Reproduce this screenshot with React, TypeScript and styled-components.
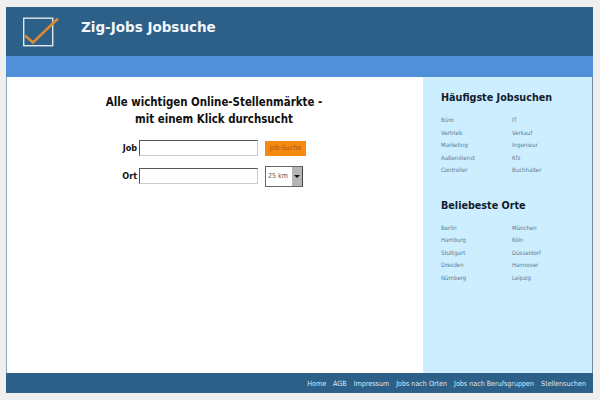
import * as React from 'react';
import styled, { createGlobalStyle } from 'styled-components';

const GlobalStyle = createGlobalStyle`
    html, body {
        margin: 0;
        padding: 0;
        background: #efefef;
        font-family: "DejaVu Sans Condensed", "DejaVu Sans", Verdana, sans-serif;
    }
`;

const Page = styled.div`
    width: 600px;
    height: 400px;
    padding: 7px 7px 7px 6px;
    box-sizing: border-box;
    overflow: hidden;
`;

const Frame = styled.div`
    height: 386px;
    display: flex;
    flex-direction: column;
`;

const Header = styled.header`
    height: 49px;
    flex: none;
    background: #2c6089;
    display: flex;
    align-items: flex-start;
    padding: 10px 0 0 17px;
    box-sizing: border-box;
`;

const Logo = styled.svg`
    width: 38px;
    height: 32px;
    flex: none;
`;

const Title = styled.h1`
    margin: 2px 0 0 20px;
    font-family: "DejaVu Sans", Verdana, sans-serif;
    font-size: 13.5px;
    line-height: 17px;
    font-weight: bold;
    color: #f2f6fa;
`;

const SubBar = styled.div`
    height: 21px;
    flex: none;
    background: #4f90d8;
`;

const Body = styled.div`
    flex: 1;
    display: flex;
    min-height: 0;
    border-left: 1px solid #8fa5b5;
    border-right: 1px solid #6f8ba3;
`;

const Main = styled.main`
    width: 416px;
    flex: none;
    background: #fff;
    padding: 17px 2px 0 0;
    box-sizing: border-box;
`;

const Headline = styled.h2`
    margin: 0 0 6px;
    font-size: 11.4px;
    line-height: 17px;
    font-weight: bold;
    color: #111;
    text-align: center;
`;

const FormRow = styled.div`
    display: flex;
    align-items: center;
    height: 28px;
`;

const Label = styled.label`
    width: 132px;
    flex: none;
    padding-right: 2px;
    box-sizing: border-box;
    text-align: right;
    font-size: 9px;
    font-weight: bold;
    color: #111;
`;

const TextInput = styled.input`
    width: 119px;
    height: 16px;
    flex: none;
    padding: 0;
    box-sizing: border-box;
    background: #fff;
    border: 1px solid #ccc;
    border-top: 1px solid #555;
    border-left: 1px solid #555;
    outline: none;
`;

const SearchButton = styled.button`
    width: 41px;
    height: 15px;
    flex: none;
    margin-left: 7px;
    padding: 0;
    border: none;
    background: #f58a13;
    color: #a8560a;
    font-family: inherit;
    font-size: 7px;
    line-height: 15px;
`;

const SelectBox = styled.div`
    width: 38px;
    height: 21px;
    flex: none;
    margin-left: 7px;
    display: flex;
    box-sizing: border-box;
    border: 1px solid #666;
    border-right-color: #444;
    background: #fff;
`;

const SelectValue = styled.span`
    flex: 1;
    padding-left: 2px;
    font-size: 7px;
    line-height: 19px;
    color: #555;
`;

const SelectArrow = styled.span`
    width: 10px;
    flex: none;
    display: flex;
    align-items: center;
    justify-content: center;
    background: #b5b5b5;

    &::after {
        content: '';
        border-left: 3px solid transparent;
        border-right: 3px solid transparent;
        border-top: 3px solid #111;
    }
`;

const Sidebar = styled.aside`
    flex: 1;
    background: #cdeeff;
    padding: 13px 0 0 18px;
    box-sizing: border-box;
`;

const SideSection = styled.section`
    margin-bottom: 21px;
`;

const SideTitle = styled.h3`
    margin: 0 0 9px;
    font-size: 10.7px;
    line-height: 15px;
    font-weight: bold;
    color: #10202c;
`;

const LinkGrid = styled.div`
    display: grid;
    grid-template-columns: 71px 1fr;
    grid-auto-rows: 12.5px;
`;

const SideLink = styled.a`
    font-size: 6px;
    line-height: 12.5px;
    color: #5b7a90;
    text-decoration: none;
`;

const Footer = styled.footer`
    height: 20px;
    flex: none;
    background: #2c6089;
    display: flex;
    align-items: center;
    justify-content: flex-end;
    gap: 7px;
    padding-right: 7px;
`;

const FooterLink = styled.a`
    font-size: 7.1px;
    color: #dfe9f1;
    text-decoration: none;
`;

const jobLinks = ['Büro', 'IT', 'Vertrieb', 'Verkauf', 'Marketing', 'Ingenieur', 'Außendienst', 'Kfz', 'Controller', 'Buchhalter'];
const placeLinks = ['Berlin', 'München', 'Hamburg', 'Köln', 'Stuttgart', 'Düsseldorf', 'Dresden', 'Hannover', 'Nürnberg', 'Leipzig'];
const footerLinks = ['Home', 'AGB', 'Impressum', 'Jobs nach Orten', 'Jobs nach Berufsgruppen', 'Stellensuchen'];

const App = () => (
    <Page>
        <GlobalStyle />
        <Frame>
            <Header>
                <Logo viewBox="0 0 38 32">
                    <rect x="0.7" y="1.2" width="29" height="27.5" fill="none" stroke="#dfe8ee" strokeWidth="1.4" />
                    <path d="M2 18.5 L10 25.5 L35 1.5" fill="none" stroke="#d98a32" strokeWidth="2.6" />
                </Logo>
                <Title>Zig-Jobs Jobsuche</Title>
            </Header>
            <SubBar />
            <Body>
                <Main>
                    <Headline>
                        Alle wichtigen Online-Stellenmärkte -<br />
                        mit einem Klick durchsucht
                    </Headline>
                    <FormRow>
                        <Label>Job</Label>
                        <TextInput />
                        <SearchButton>Job-Suche</SearchButton>
                    </FormRow>
                    <FormRow>
                        <Label>Ort</Label>
                        <TextInput />
                        <SelectBox>
                            <SelectValue>25 km</SelectValue>
                            <SelectArrow />
                        </SelectBox>
                    </FormRow>
                </Main>
                <Sidebar>
                    <SideSection>
                        <SideTitle>Häufigste Jobsuchen</SideTitle>
                        <LinkGrid>
                            {jobLinks.map(name => <SideLink key={name}>{name}</SideLink>)}
                        </LinkGrid>
                    </SideSection>
                    <SideSection>
                        <SideTitle>Beliebeste Orte</SideTitle>
                        <LinkGrid>
                            {placeLinks.map(name => <SideLink key={name}>{name}</SideLink>)}
                        </LinkGrid>
                    </SideSection>
                </Sidebar>
            </Body>
            <Footer>
                {footerLinks.map(name => <FooterLink key={name}>{name}</FooterLink>)}
            </Footer>
        </Frame>
    </Page>
);

export default App;
